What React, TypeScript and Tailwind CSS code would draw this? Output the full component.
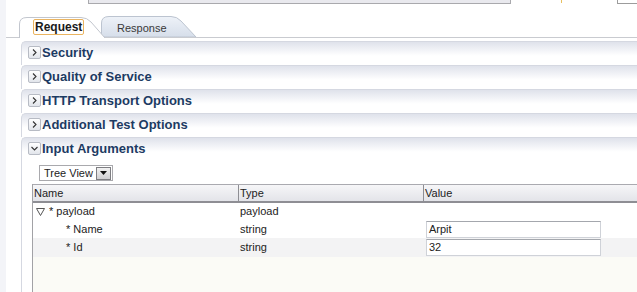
import React from "react";

const SECTIONS = ["Security", "Quality of Service", "HTTP Transport Options", "Additional Test Options"];

function ToggleBox({ open }: { open?: boolean }) {
  return (
    <div className="w-[13px] h-[13px] shrink-0 rounded-[2px] border border-[#b7bbc4] bg-gradient-to-b from-white to-[#e2e5eb] flex items-center justify-center">
      <svg width="9" height="9" viewBox="0 0 9 9">
        {open ? (
          <path d="M1.5 3 L4.5 6 L7.5 3" fill="none" stroke="#333" strokeWidth="1.1" />
        ) : (
          <path d="M3 1.5 L6 4.5 L3 7.5" fill="none" stroke="#333" strokeWidth="1.1" />
        )}
      </svg>
    </div>
  );
}

function SectionHeader({ title, open }: { title: string; open?: boolean }) {
  return (
    <div className="h-[24px] shrink-0 rounded-tl-[5px] border-l border-t border-[#d5d8e1] bg-gradient-to-b from-[#dfe2eb] via-white via-60% to-white flex items-center pl-[6px] pb-[2px] gap-[1px]">
      <ToggleBox open={open} />
      <span className="text-[13px] font-bold text-[#1d3b63] leading-none">{title}</span>
    </div>
  );
}

function ValueInput({ value }: { value: string }) {
  return (
    <div className="ml-[3px] w-[175px] h-[17px] border border-[#cfd2d8] border-t-[#a4a7ad] bg-white flex items-center pl-[2px] text-[11px] text-[#222]">
      {value}
    </div>
  );
}

export default function App() {
  return (
    <div className="w-[637px] h-[292px] overflow-hidden bg-white flex font-['Liberation_Sans',Arial,sans-serif]">
      <div className="w-[6px] shrink-0 bg-[#f3f4f8]" />
      <div className="flex-1 flex flex-col min-w-0">
        {/* cut-off endpoint field */}
        <div className="h-[4px] shrink-0 flex">
          <div className="ml-[82px] w-[424px] h-[4px] bg-[#e9e9ee] border-x border-b border-[#a9a9ad]" />
          <div className="ml-[50px] w-[1px] h-[3px] bg-[#e8c060]" />
          <div className="ml-[55px] w-[20px] h-[4px] border-l border-b border-[#9c9c9c]" />
        </div>

        {/* tabs */}
        <div className="mt-[10px] h-[24px] shrink-0 flex items-end pl-[13px] border-b border-[#c9cbd0]">
          <div className="relative w-[86px] h-[22px] -mb-[1px] z-10">
            <svg className="absolute inset-0" width="86" height="22" viewBox="0 0 86 22">
              <path d="M0.5 22 L0.5 8 Q0.5 1.5 8 1.5 L62 1.5 Q68 1.5 72 6 L86 22" fill="white" stroke="#c2c6ce" />
            </svg>
            <div className="absolute left-[14px] top-[3px] h-[16px] px-[1px] border border-[#eab460] rounded-[2px] flex items-center text-[12px] font-bold text-[#1a1a1a]">
              Request
            </div>
          </div>
          <div className="relative w-[96px] h-[22px] -ml-[4px]">
            <svg className="absolute inset-0" width="96" height="22" viewBox="0 0 96 22">
              <defs>
                <linearGradient id="rt" x1="0" y1="0" x2="0" y2="1">
                  <stop offset="0" stopColor="#eef2f8" />
                  <stop offset="1" stopColor="#d6deea" />
                </linearGradient>
              </defs>
              <path d="M0.5 22 L0.5 8 Q0.5 1.5 8 1.5 L70 1.5 Q76 1.5 80 6 L95 22 Z" fill="url(#rt)" stroke="#bcc4d0" />
            </svg>
            <span className="absolute left-[16px] top-[5px] text-[11px] text-[#3a3a3a]">Response</span>
          </div>
        </div>

        {/* accordion */}
        <div className="mt-[3px] ml-[15px] flex-1 flex flex-col min-h-0">
          {SECTIONS.map((s) => (
            <SectionHeader key={s} title={s} />
          ))}
          <SectionHeader title="Input Arguments" open />
          <div className="flex-1 border-l border-[#d5d8e1] flex flex-col min-h-0">
            <div className="mt-[4px] ml-[17px] w-[74px] h-[16px] border border-[#a9a9ad] bg-white flex items-center justify-between">
              <span className="pl-[4px] text-[11px] text-[#222]">Tree View</span>
              <div className="w-[15px] h-[13px] mr-[1px] border border-[#7e7e82] bg-gradient-to-b from-[#f2f2f2] to-[#cfcfd2] flex items-center justify-center">
                <svg width="7" height="4" viewBox="0 0 7 4">
                  <path d="M0 0 L7 0 L3.5 4 Z" fill="#111" />
                </svg>
              </div>
            </div>

            <div className="mt-[3px] ml-[10px] flex-1 border-l border-[#a2a2a6] flex flex-col text-[11px] text-[#222]">
              <div className="h-[19px] shrink-0 grid grid-cols-[205px_185px_1fr] border-t border-[#aaaab0] border-b-2 border-b-[#8e8e94] bg-gradient-to-b from-[#f6f6f8] to-[#e3e4e9]">
                <div className="pl-[1px] flex items-center">Name</div>
                <div className="pl-[1px] flex items-center border-l border-[#8e8e94]">Type</div>
                <div className="pl-[1px] flex items-center border-l border-[#8e8e94]">Value</div>
              </div>
              <div className="h-[17px] shrink-0 grid grid-cols-[205px_185px_1fr] bg-white">
                <div className="flex items-center pl-[3px] gap-[4px]">
                  <svg width="9" height="8" viewBox="0 0 9 8">
                    <path d="M0.5 0.5 L8.5 0.5 L4.5 7.5 Z" fill="none" stroke="#555" />
                  </svg>
                  <span>* payload</span>
                </div>
                <div className="flex items-center pl-[2px]">payload</div>
                <div />
              </div>
              <div className="h-[18px] shrink-0 grid grid-cols-[205px_185px_1fr] bg-white">
                <div className="flex items-center pl-[33px]">* Name</div>
                <div className="flex items-center pl-[2px]">string</div>
                <div className="flex items-center">
                  <ValueInput value="Arpit" />
                </div>
              </div>
              <div className="h-[19px] shrink-0 grid grid-cols-[205px_185px_1fr] bg-[#f3f3f4]">
                <div className="flex items-center pl-[33px]">* Id</div>
                <div className="flex items-center pl-[2px]">string</div>
                <div className="flex items-center">
                  <ValueInput value="32" />
                </div>
              </div>
              <div className="flex-1 bg-[#fbfbf6]" />
            </div>
          </div>
        </div>
      </div>
    </div>
  );
}
